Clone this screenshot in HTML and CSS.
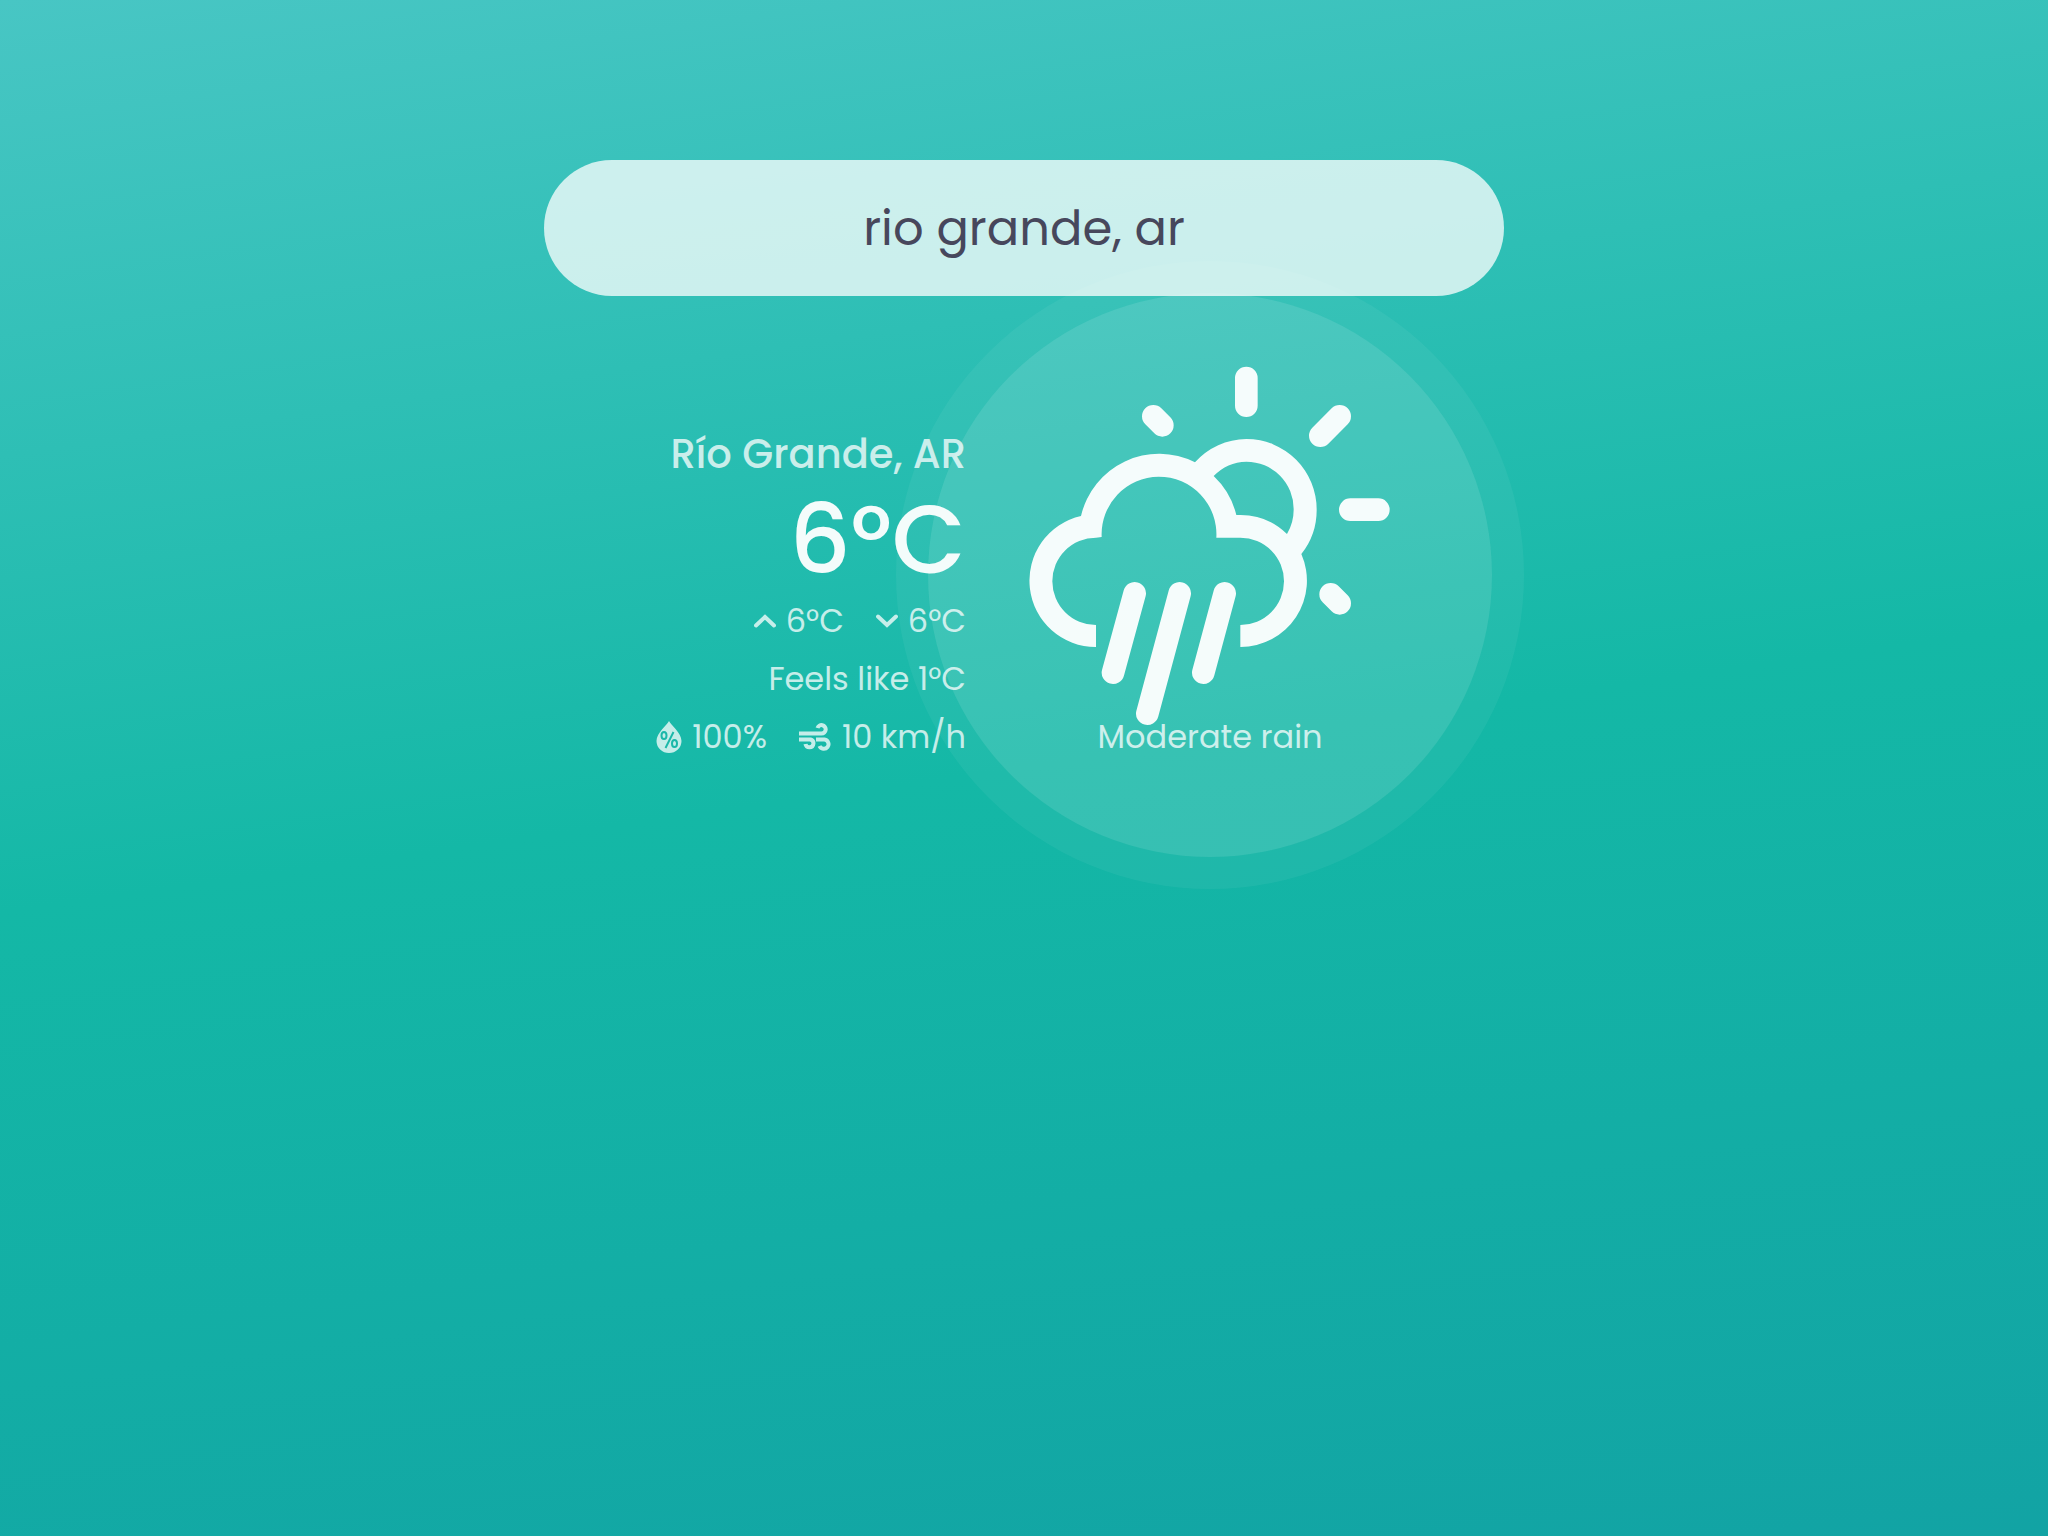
FILE: index.html
```html
<!DOCTYPE html>
<html lang="en">
<head>
  <meta charset="utf-8">
  <meta name="viewport" content="width=device-width, initial-scale=1">
  <title>Weather</title>
  <link rel="stylesheet" href="styles.css">
</head>
<body>
  <main class="app">
    <form class="search" role="search">
      <input class="search-input" type="text" aria-label="Search for a city" value="rio grande, ar">
    </form>
    <section class="weather">
      <div class="details">
        <h1 class="city">Río Grande, AR</h1>
        <p class="temperature">6°C</p>
        <ul class="row">
          <li class="reading">
            <svg class="icon icon-chevron" viewBox="0 0 22 14" aria-hidden="true"><path d="M2 11.500l9-8.500 9 8.500"/></svg>
            6°C
          </li>
          <li class="reading">
            <svg class="icon icon-chevron" viewBox="0 0 22 14" aria-hidden="true"><path d="M2 2.500l9 8.500 9-8.500"/></svg>
            6°C
          </li>
        </ul>
        <p class="row">Feels like 1°C</p>
        <ul class="row">
          <li class="reading">
            <svg class="icon icon-drop" viewBox="0 0 26 32" aria-hidden="true">
              <path d="M13 0C11 4 0.500 12 0.500 20a12.500 12 0 0 0 25 0C25.500 12 15 4 13 0Z"/>
              <g class="percent"><ellipse cx="8" cy="14.500" rx="2.500" ry="3.500"/><ellipse cx="18.500" cy="22.500" rx="2.500" ry="3.500"/><path d="M17.500 11L9.500 27"/></g>
            </svg>
            100%
          </li>
          <li class="reading">
            <svg class="icon icon-wind" viewBox="0 0 33 28" aria-hidden="true">
              <path d="M0 10.500H22.500A4.200 4.200 0 1 0 18.500 5M0 16.500H11.500A4 4 0 1 1 6.500 21M17 16.500H25.500A4.700 4.700 0 1 1 20.500 23"/>
            </svg>
            10 km/h
          </li>
        </ul>
      </div>
      <figure class="condition">
        <svg class="condition-icon" viewBox="0 0 1200 1200" aria-hidden="true">
          <path fill-rule="evenodd" d="M258 891A199 199 0 0 1 213 498A240 240 0 0 1 555 337A211 211 0 0 1 709 267A211 211 0 0 1 920 479A211 211 0 0 1 874 612A199 199 0 0 1 691 891V825A131 131 0 0 0 691 563H619A173 173 0 0 0 446 380A173 173 0 0 0 275 561L258 563A131 131 0 0 0 258 825ZM611 378A240 240 0 0 1 679 495H691A199 199 0 0 1 831 552A142 142 0 0 0 851 479A142 142 0 0 0 709 335A142 142 0 0 0 611 378Z"/>
          <path class="strokes" d="M709 84V167M989 199L931 257M1021 479H1105M962 733L989 760M430 199L457 226M374 730L309 968M509 730L412 1091M644 730L580 968"/>
        </svg>
        <figcaption class="caption">Moderate rain</figcaption>
      </figure>
    </section>
  </main>
</body>
</html>
```
FILE: styles.css
```css
* {
  box-sizing: border-box;
  margin: 0;
  padding: 0;
}

body {
  min-height: 100vh;
  background: linear-gradient(172deg, #48c6c4 0%, #14b8a6 50%, #12a3a4 100%);
  color: rgba(255, 255, 255, 0.75);
  font-family: Poppins, Inter, sans-serif;
}

.app {
  display: flex;
  flex-direction: column;
  align-items: center;
  padding: 160px 32px;
}

.search {
  position: relative;
  z-index: 1;
  width: 100%;
  max-width: 960px;
}

.search-input {
  display: block;
  width: 100%;
  height: 136px;
  padding: 2px 64px 0;
  border: 0;
  border-radius: 68px;
  outline: 0;
  background: rgba(255, 255, 255, 0.75);
  color: #47475c;
  font: inherit;
  font-size: 48px;
  text-align: center;
}

.weather {
  display: flex;
  justify-content: center;
  gap: 62px;
  margin-top: 54px;
}

.details {
  display: flex;
  flex-direction: column;
  align-items: flex-end;
  width: 310px;
  padding-top: 71px;
  white-space: nowrap;
}

.city {
  font-size: 40px;
  font-weight: 500;
  line-height: 66px;
}

.temperature {
  color: rgba(255, 255, 255, 0.95);
  font-size: 96px;
  font-weight: 500;
  line-height: 106px;
}

.row {
  display: flex;
  gap: 32px;
  margin-top: -2px;
  font-size: 32px;
  line-height: 60px;
  list-style: none;
}

.reading {
  display: flex;
  align-items: center;
  gap: 10px;
}

.icon {
  flex: none;
  fill: currentColor;
}

.icon-chevron {
  width: 22px;
  height: 14px;
  fill: none;
  stroke: currentColor;
  stroke-width: 4;
  stroke-linecap: round;
}

.icon-drop {
  width: 26px;
  height: 32px;
}

.percent {
  fill: none;
  stroke: #1bb8a9;
  stroke-width: 2;
}

.icon-wind {
  width: 33px;
  height: 28px;
  fill: none;
  stroke: currentColor;
  stroke-width: 4;
}

.condition {
  position: relative;
  display: flex;
  flex-direction: column;
  align-items: center;
  width: 364px;
}

.condition::before {
  content: "";
  position: absolute;
  top: -57px;
  left: 50%;
  width: 564px;
  height: 564px;
  margin-left: -282px;
  border-radius: 50%;
  background: rgba(255, 255, 255, 0.15);
  box-shadow: 0 0 0 32px rgba(255, 255, 255, 0.05);
}

.condition-icon {
  position: relative;
  width: 400px;
  height: 400px;
  margin-bottom: -42px;
  fill: rgba(255, 255, 255, 0.95);
}

.strokes {
  fill: none;
  stroke: rgba(255, 255, 255, 0.95);
  stroke-width: 68;
  stroke-linecap: round;
}

.caption {
  position: relative;
  font-size: 32px;
  line-height: 58px;
}
```
